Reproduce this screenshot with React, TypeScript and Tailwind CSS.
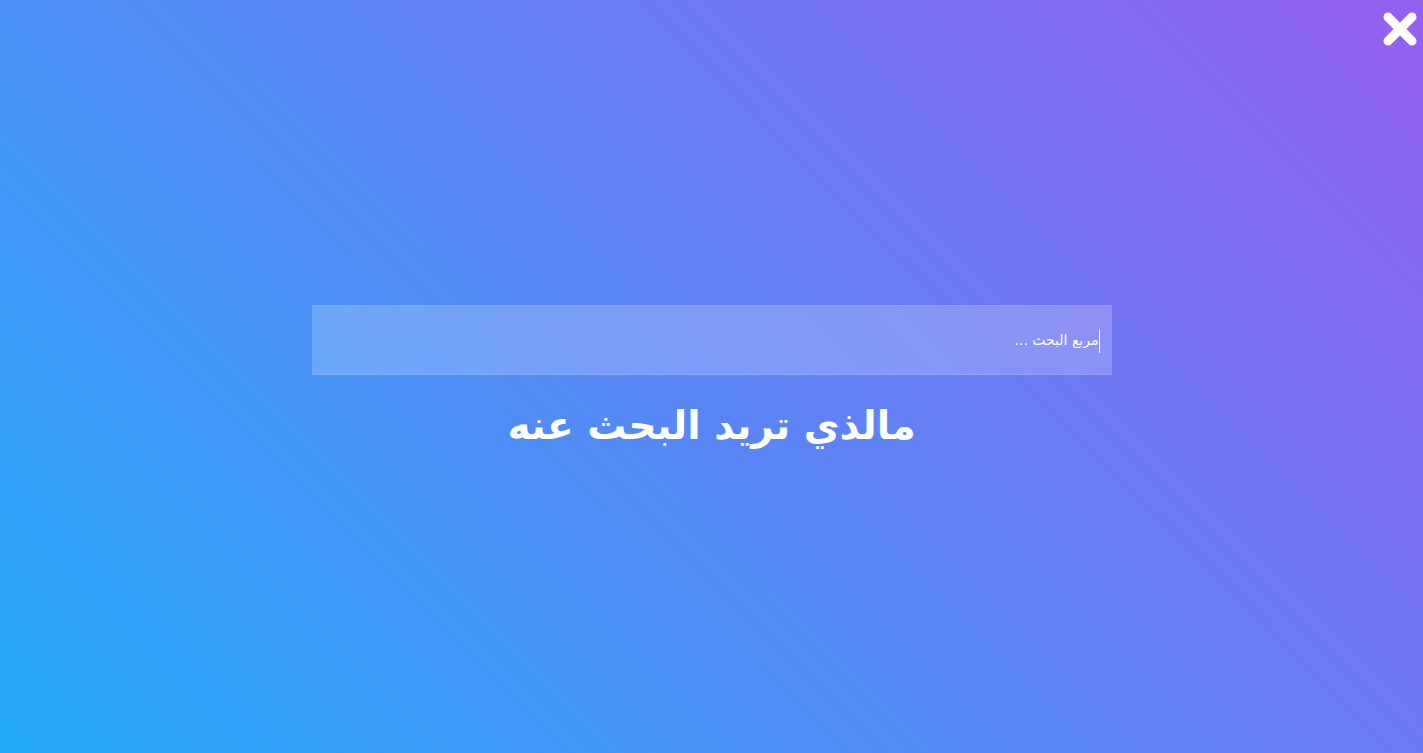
import React from "react";

export default function App() {
  return (
    <div
      dir="rtl"
      className="relative h-[753px] w-full overflow-hidden bg-[linear-gradient(45deg,#22a9f8,#9460f0)] flex flex-col items-center justify-center"
      style={{ fontFamily: '"DejaVu Sans", sans-serif' }}
    >
      <button className="absolute top-[9px] right-[3px] w-[40px] h-[40px] flex items-center justify-center" aria-label="close">
        <svg viewBox="0 0 40 40" width="40" height="40">
          <path d="M8 8 L32 32 M32 8 L8 32" stroke="#ffffff" strokeWidth="9" strokeLinecap="round" fill="none" />
        </svg>
      </button>

      <div className="flex flex-col items-center gap-[25px] pt-[4px]">
        <div className="relative w-[800px] h-[70px] bg-white/20 border-y border-white/10 flex items-center pr-[13px]">
          <input
            type="text"
            autoFocus
            placeholder="مربع البحث ..."
            className="w-full bg-transparent outline-none text-white text-[14px] placeholder:text-white caret-white"
          />
          {/* caret */}
          <span className="absolute right-[12px] top-[23px] w-px h-[24px] bg-white" />
        </div>
        <h1 className="text-white text-[39px] font-bold leading-[52px]">مالذي تريد البحث عنه</h1>
      </div>
    </div>
  );
}
